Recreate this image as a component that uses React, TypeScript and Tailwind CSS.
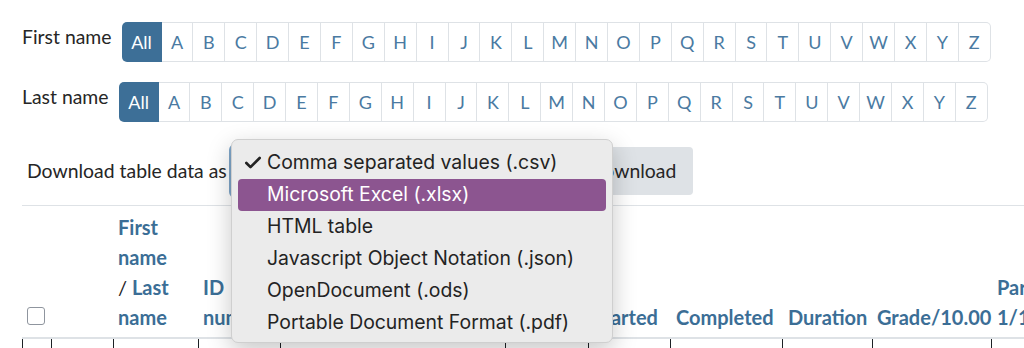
import { Check } from "lucide-react";

const letters = "ABCDEFGHIJKLMNOPQRSTUVWXYZ".split("");

const formats = [
  "Comma separated values (.csv)",
  "Microsoft Excel (.xlsx)",
  "HTML table",
  "Javascript Object Notation (.json)",
  "OpenDocument (.ods)",
  "Portable Document Format (.pdf)",
];

const cols =
  "grid grid-cols-[29px_62px_85px_82px_225px_83px_82px_112px_90px_119px_140px]";

const InitialsBar = ({ label }: { label: string }) => (
  <div className="flex items-center">
    <span className="mr-[10px] -mt-[10px] whitespace-nowrap">{label}</span>
    <div className="flex h-[40px] text-[18px]">
      <span className="flex w-[40px] items-center justify-center rounded-l-[5px] bg-[#3d6f97] text-white">
        All
      </span>
      {letters.map((l, i) => (
        <span
          key={l}
          className={`flex w-[31.9px] items-center justify-center border-y border-r border-[#dee2e6] text-[#4a7aa2] ${
            i === letters.length - 1 ? "rounded-r-[5px]" : ""
          }`}
        >
          {l}
        </span>
      ))}
    </div>
  </div>
);

const App = () => {
  return (
    <div className="relative h-[348px] w-[1024px] overflow-hidden bg-white font-['Lato',sans-serif] text-[19.4px] text-[#262626]">
      <div className="pl-[22px] pt-[22px]">
        <InitialsBar label="First name" />
        <div className="mt-[20px]">
          <InitialsBar label="Last name" />
        </div>

        <div className="mt-[25px] flex h-[48px] items-center pl-[5px]">
          <span className="mr-[2px] whitespace-nowrap">Download table data as</span>
          <div className="h-[54px] w-[338px] shrink-0 rounded-[6px] border-2 border-[#7fa6c9] bg-white" />
          <button className="ml-[5px] h-[48px] shrink-0 rounded-[4px] bg-[#dee2e6] px-[17px]">
            Download
          </button>
        </div>

        <div className="mt-[10px] border-t border-[#dee2e6]">
          <div
            className={`${cols} items-end border-b-2 border-[#dee2e6] text-[20px] font-bold leading-[30px] text-[#3b6e96]`}
          >
            <div className="px-[5px] pb-[12px]">
              <div className="h-[18px] w-[18px] rounded-[3px] border border-[#8f959e] bg-white" />
            </div>
            <div />
            <div className="px-[5px] pb-[5px] pt-[6px]">
              <div>First</div>
              <div>name</div>
              <div>
                <span className="font-normal text-[#1d2125]">/</span> Last
              </div>
              <div>name</div>
            </div>
            <div className="overflow-hidden px-[5px] pb-[5px]">
              <div>ID</div>
              <div>number</div>
            </div>
            <div className="overflow-hidden whitespace-nowrap px-[5px] pb-[5px]">Email address</div>
            <div className="overflow-hidden px-[5px] pb-[5px]">State</div>
            <div className="px-[5px] pb-[5px]">Started</div>
            <div className="px-[6px] pb-[5px]">Completed</div>
            <div className="px-[6px] pb-[5px]">Duration</div>
            <div className="px-[5px] pb-[5px]">Grade/10.00</div>
            <div className="whitespace-nowrap px-[6px] pb-[5px]">
              <div>Part</div>
              <div>1/1.00</div>
            </div>
          </div>
          <div className={`${cols} h-[20px]`}>
            {Array.from({ length: 11 }).map((_, i) => (
              <div key={i} className="border-l border-[#1d2125]" />
            ))}
          </div>
        </div>
      </div>

      <div className="absolute left-[231px] top-[139px] h-[204px] w-[382px] rounded-[7px] border border-[#cfcfcf] bg-[#ebebeb] px-[6px] pt-[7px] font-['Inter',sans-serif] text-[19.4px] text-[#232323] shadow-[0_8px_24px_rgba(0,0,0,0.22)]">
        {formats.map((f, i) => (
          <div
            key={f}
            className={`flex h-[32px] items-center rounded-[4px] ${
              i === 1 ? "bg-[#8c5590] text-white" : ""
            }`}
          >
            <span className="flex w-[29px] justify-end pr-[4px]">
              {i === 0 && <Check size={20} strokeWidth={3.2} />}
            </span>
            <span>{f}</span>
          </div>
        ))}
      </div>
    </div>
  );
};

export default App;
